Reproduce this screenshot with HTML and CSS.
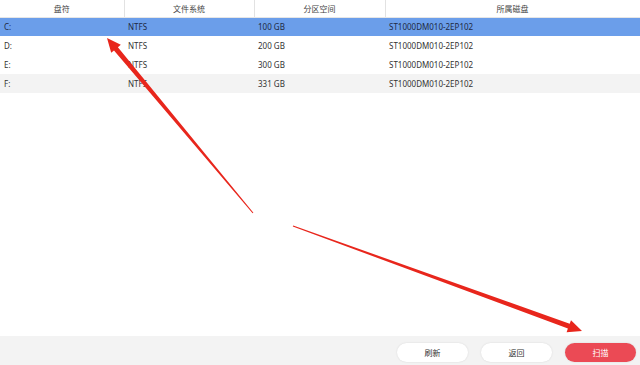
FILE: index.html
```html
<!DOCTYPE html>
<html lang="zh-CN">
<head>
    <meta charset="UTF-8">
    <title>分区列表</title>
    <link rel="stylesheet" href="styles.css">
</head>
<body>
    <div class="window">
        <!-- Partition table -->
        <table class="parts">
            <thead>
                <tr>
                    <th class="col-letter">盘符</th>
                    <th class="col-fs">文件系统</th>
                    <th class="col-size">分区空间</th>
                    <th class="col-disk">所属磁盘</th>
                </tr>
            </thead>
            <tbody>
                <tr class="selected">
                    <td>C:</td><td>NTFS</td><td>100 GB</td><td>ST1000DM010-2EP102</td>
                </tr>
                <tr>
                    <td>D:</td><td>NTFS</td><td>200 GB</td><td>ST1000DM010-2EP102</td>
                </tr>
                <tr>
                    <td>E:</td><td>NTFS</td><td>300 GB</td><td>ST1000DM010-2EP102</td>
                </tr>
                <tr class="alt">
                    <td>F:</td><td>NTFS</td><td>331 GB</td><td>ST1000DM010-2EP102</td>
                </tr>
            </tbody>
        </table>

        <div class="spacer"></div>

        <!-- Bottom actions -->
        <div class="footer">
            <button class="btn">刷新</button>
            <button class="btn">返回</button>
            <button class="btn btn-primary">扫描</button>
        </div>

        <!-- Annotation arrows -->
        <svg class="arrows" width="640" height="365" viewBox="0 0 640 365">
            <polygon points="253.4,212.7 117.9,47.2 120.8,44.7 107,38 111.2,52.8 114.0,50.4 252.6,213.3" />
            <polygon points="292.8,226.5 567.9,328.5 566.6,332.2 582,331 571.0,320.2 569.7,323.8 293.2,225.5" />
        </svg>
    </div>
</body>
</html>
```
FILE: styles.css
```css
/* Reset */
* {
    box-sizing: border-box;
    margin: 0;
    padding: 0;
}

body {
    font-family: "Noto Sans", "Noto Sans CJK SC", sans-serif;
    background: #fff;
    color: #333;
    width: 640px;
    height: 365px;
    overflow: hidden;
}

/* Window */
.window {
    position: relative;
    display: flex;
    flex-direction: column;
    width: 640px;
    height: 365px;
}

/* Table */
.parts {
    width: 640px;
    border-collapse: collapse;
    table-layout: fixed;
    font-size: 8px;
}

.parts th {
    height: 17px;
    font-weight: normal;
    color: #444;
    text-align: center;
    border-right: 1px solid #e2e2e2;
    border-bottom: 1px solid #e6e6e6;
}

.col-letter { width: 124px; }
.col-fs { width: 130px; }
.col-size { width: 131px; }
.col-disk { width: 255px; }

.parts td {
    height: 19px;
    padding-left: 4px;
    color: #333;
    white-space: nowrap;
}

.parts tr.selected {
    background: #6b9eea;
}

.parts tr.selected td {
    color: #1f2a44;
}

.parts tr.alt {
    background: #f3f3f3;
}

.spacer {
    flex: 1;
}

/* Footer */
.footer {
    height: 29px;
    background: #f3f3f3;
    display: flex;
    justify-content: flex-end;
    align-items: center;
    gap: 13px;
    padding: 3px 4px 0 0;
}

.btn {
    width: 71px;
    height: 19px;
    border: none;
    border-radius: 10px;
    background: #fff;
    color: #333;
    font-family: "Noto Sans", "Noto Sans CJK SC", sans-serif;
    font-size: 8px;
    box-shadow: 0 0 2px rgba(0, 0, 0, 0.12);
}

.btn-primary {
    background: #eb4a55;
    color: #fff;
}

/* Arrows */
.arrows {
    position: absolute;
    left: 0;
    top: 0;
    pointer-events: none;
}

.arrows polygon {
    fill: #e8261c;
}
```
